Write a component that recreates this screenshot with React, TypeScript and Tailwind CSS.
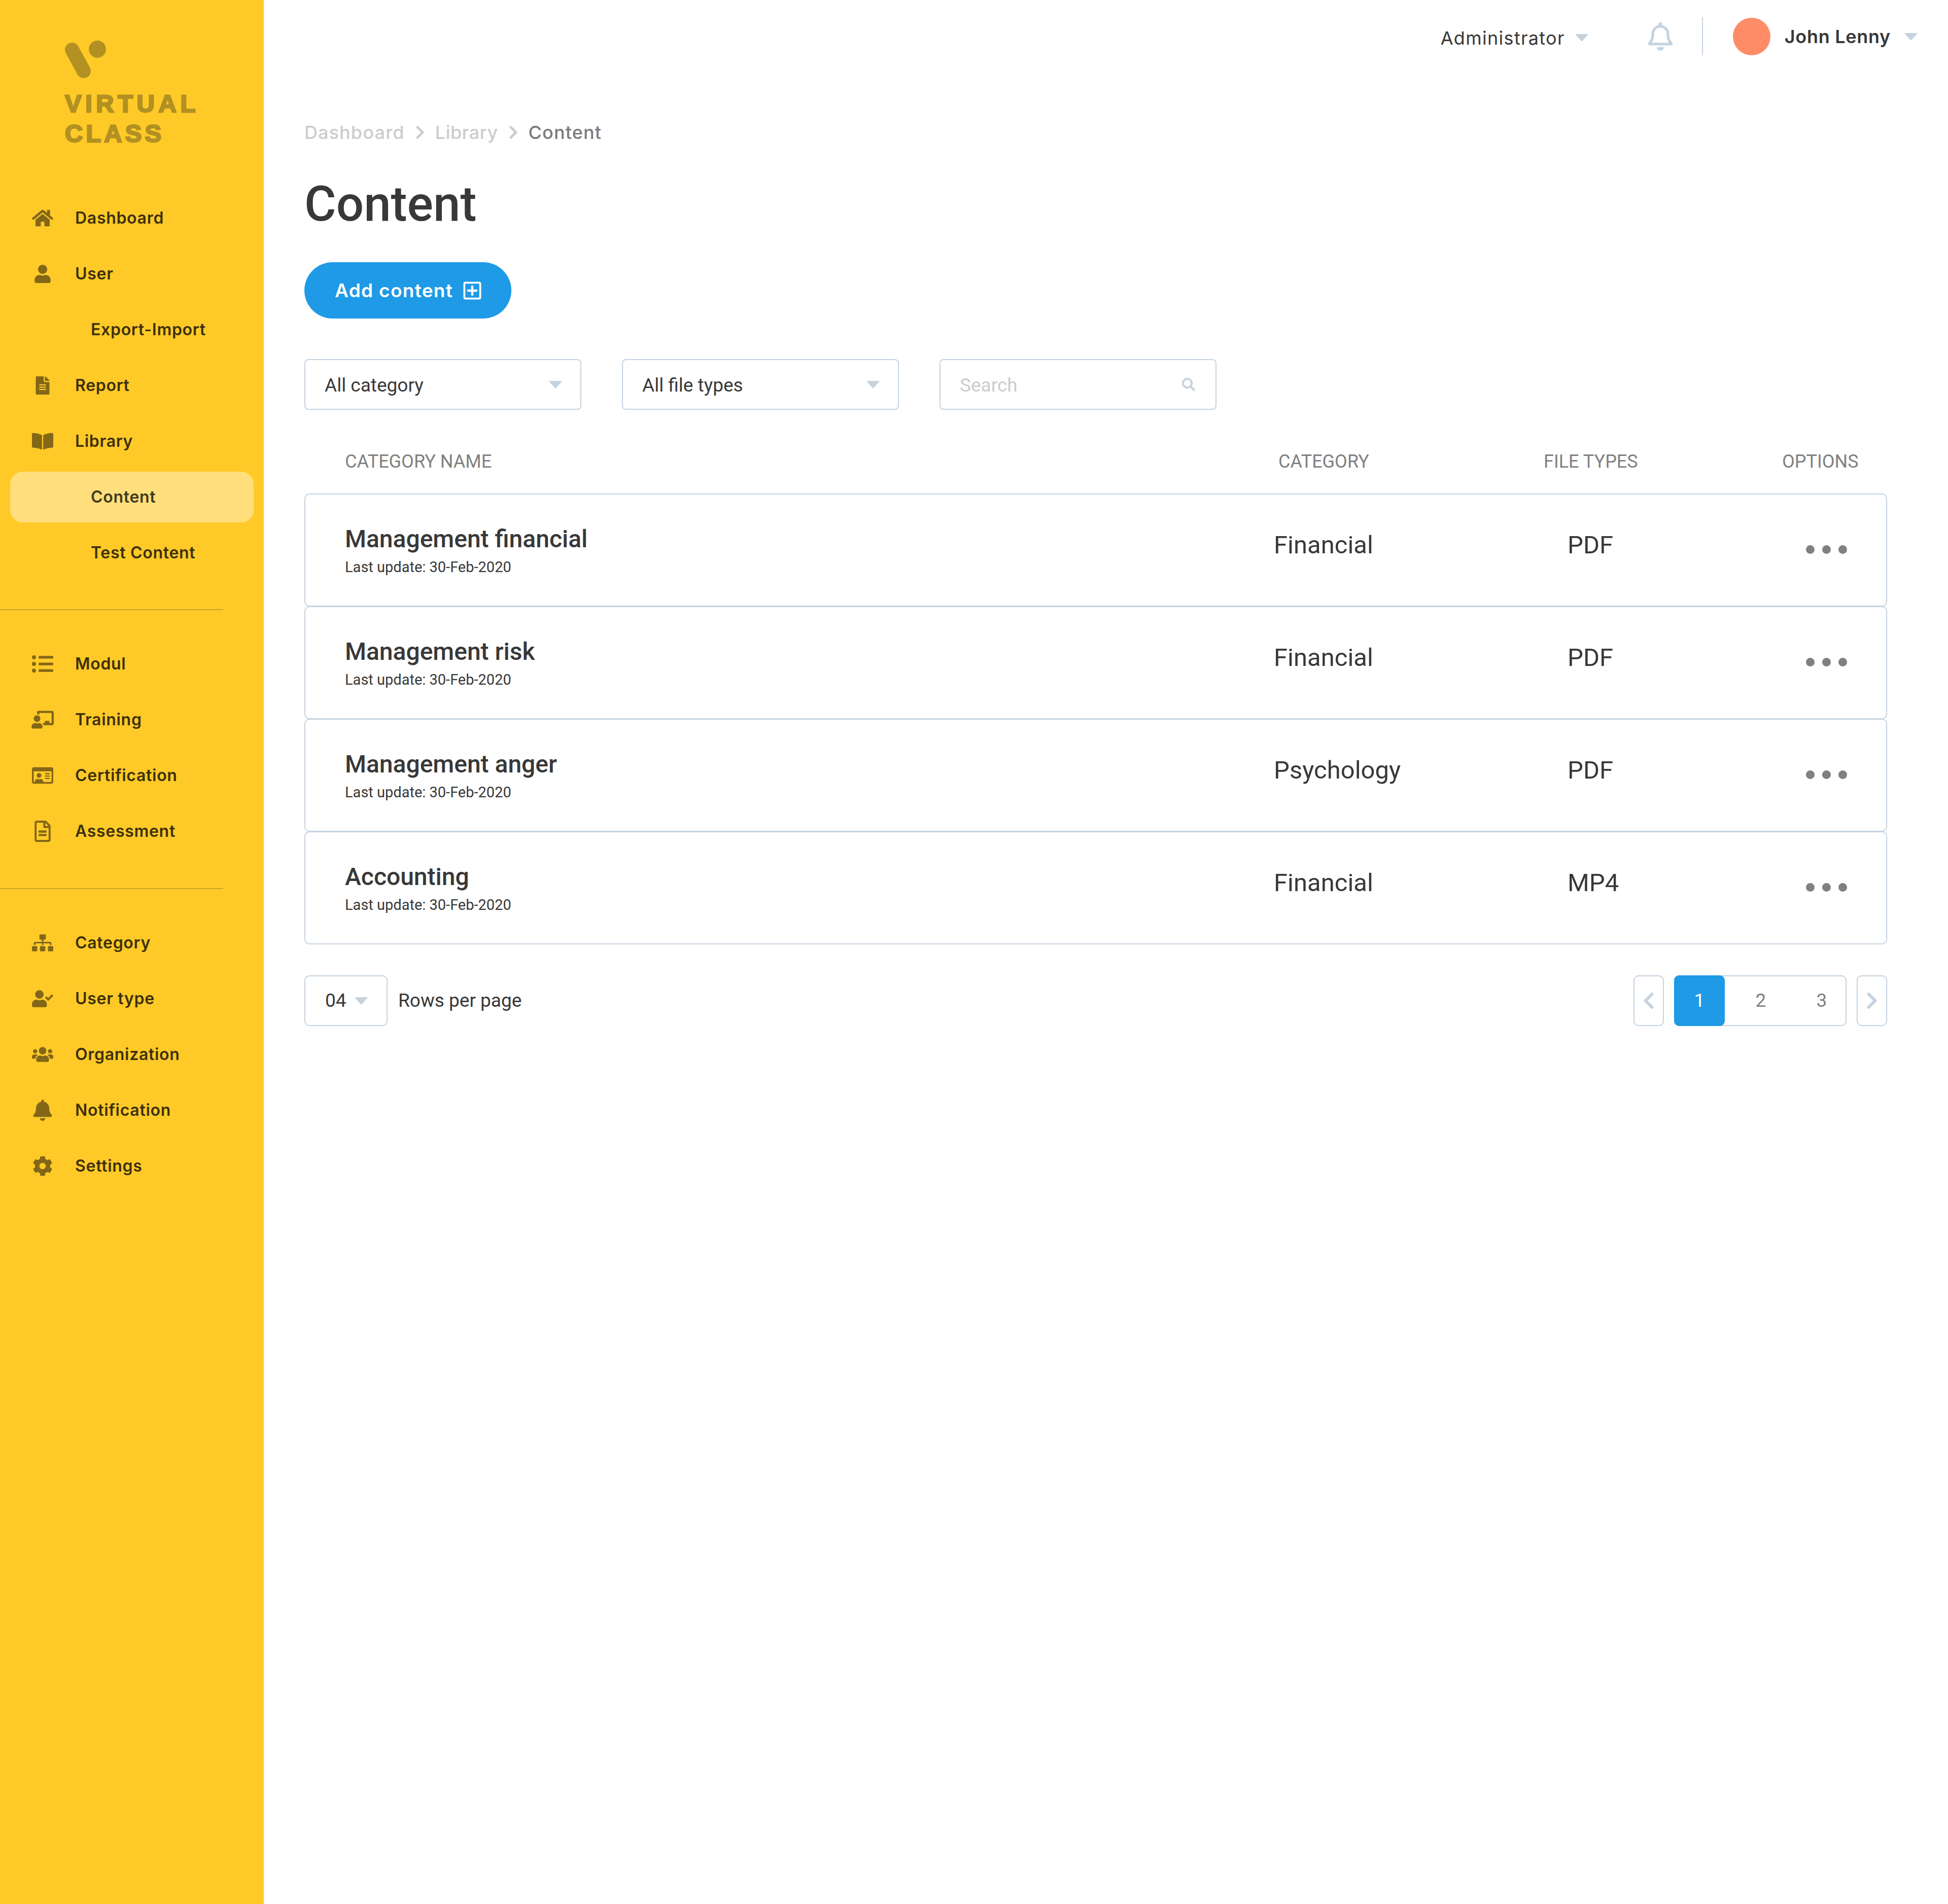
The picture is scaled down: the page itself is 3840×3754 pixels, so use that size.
import type { ReactNode } from 'react';
import {
  FaHome,
  FaUser,
  FaFileAlt,
  FaBookOpen,
  FaListUl,
  FaChalkboardTeacher,
  FaRegIdCard,
  FaRegFileAlt,
  FaSitemap,
  FaUserCheck,
  FaUsers,
  FaBell,
  FaCog,
  FaRegBell,
  FaSearch,
  FaRegPlusSquare,
  FaChevronLeft,
  FaChevronRight,
} from 'react-icons/fa';

const filas = [
  { nombre: 'Management financial', categoria: 'Financial', tipo: 'PDF' },
  { nombre: 'Management risk', categoria: 'Financial', tipo: 'PDF' },
  { nombre: 'Management anger', categoria: 'Psychology', tipo: 'PDF' },
  { nombre: 'Accounting', categoria: 'Financial', tipo: 'MP4' },
];

function Triangle() {
  return (
    <svg width="26" height="16" viewBox="0 0 26 16" className="shrink-0">
      <path d="M2 1h22c1 0 1.600 1 1 1.800L14.500 14.500c-.8.8-2.200.8-3 0L1 2.800C.4 2 1 1 2 1z" fill="#c5d3e0" />
    </svg>
  );
}

function NavItem({ icon, label, active, sub }: { icon?: ReactNode; label: string; active?: boolean; sub?: boolean }) {
  return (
    <div className="h-[110px] flex items-center">
      <div
        className={`h-[100px] w-[480px] ml-[20px] rounded-[25px] flex items-center ${active ? 'bg-[#ffdf7c]' : ''} ${sub ? 'pl-[159px]' : ''}`}
      >
        {!sub && <span className="w-[128px] pl-[20px] pr-[21px] flex justify-center text-[#836717] shrink-0">{icon}</span>}
        <span className={`text-[32px] font-semibold tracking-[0.7px] ${active ? 'text-[#3f3a20]' : 'text-[#3d300a]'}`}>{label}</span>
      </div>
    </div>
  );
}

function Sidebar() {
  return (
    <aside className="w-[520px] shrink-0 bg-[#ffca28] font-['Inter',sans-serif]">
      <div className="h-[375px] pl-[128px] pt-[80px]">
        <svg width="81" height="74" viewBox="128 80 81 74" className="block">
          <line x1="142" y1="98" x2="165" y2="140" stroke="#b29022" strokeWidth="28" strokeLinecap="round" />
          <circle cx="192" cy="97" r="17" fill="#b29022" />
        </svg>
        <div className="mt-[21px] font-['Liberation_Sans',sans-serif] font-bold text-[49px] leading-[59px] text-[#b29022] [-webkit-text-stroke:3px_#b29022]">
          <div className="tracking-[7.500px]">VIRTUAL</div>
          <div className="tracking-[6px]">CLASS</div>
        </div>
      </div>
      <NavItem icon={<FaHome size={42} />} label="Dashboard" />
      <NavItem icon={<FaUser size={36} />} label="User" />
      <NavItem sub label="Export-Import" />
      <NavItem icon={<FaFileAlt size={36} />} label="Report" />
      <NavItem icon={<FaBookOpen size={42} />} label="Library" />
      <NavItem sub active label="Content" />
      <NavItem sub label="Test Content" />
      <div className="mt-[56px] mb-[51px] h-[2px] w-[440px] bg-[#cda627]" />
      <NavItem icon={<FaListUl size={42} />} label="Modul" />
      <NavItem icon={<FaChalkboardTeacher size={44} />} label="Training" />
      <NavItem icon={<FaRegIdCard size={42} />} label="Certification" />
      <NavItem icon={<FaRegFileAlt size={42} />} label="Assessment" />
      <div className="mt-[57px] mb-[51px] h-[2px] w-[440px] bg-[#cda627]" />
      <NavItem icon={<FaSitemap size={42} />} label="Category" />
      <NavItem icon={<FaUserCheck size={42} />} label="User type" />
      <NavItem icon={<FaUsers size={42} />} label="Organization" />
      <NavItem icon={<FaBell size={42} />} label="Notification" />
      <NavItem icon={<FaCog size={40} />} label="Settings" />
    </aside>
  );
}

function TopBar() {
  return (
    <header className="h-[143px] flex items-center justify-end pr-[60px] font-['Inter',sans-serif] text-[#383838]">
      <span className="text-[36px] tracking-[1.300px] mt-[6px]">Administrator</span>
      <span className="ml-[20px] mt-[4px]">
        <Triangle />
      </span>
      <span className="ml-[114px] text-[#c5d3e0]">
        <FaRegBell size={56} />
      </span>
      <span className="ml-[54px] w-[2px] h-[75px] bg-[#c5d3e0]" />
      <span className="ml-[59px] w-[74px] h-[74px] rounded-full bg-[#fd8c67]" />
      <span className="ml-[28px] text-[36px] tracking-[0.7px] font-semibold">John Lenny</span>
      <span className="ml-[27px]">
        <Triangle />
      </span>
    </header>
  );
}

function Filtro({ texto }: { texto: string }) {
  return (
    <div className="w-[546px] h-[100px] border-2 border-[#c5d3e0] rounded-[8px] pl-[38px] pr-[36px] flex items-center justify-between text-[37px] text-[#383838]">
      <span className="pt-[3px]">{texto}</span>
      <Triangle />
    </div>
  );
}

function Fila({ nombre, categoria, tipo, primera }: { nombre: string; categoria: string; tipo: string; primera: boolean }) {
  return (
    <div
      className={`h-[223px] border-2 border-[#c5d3e0] rounded-[10px] pl-[78px] pt-[58px] grid grid-cols-[1831px_579px_470px_1fr] ${primera ? '' : '-mt-[1px]'}`}
    >
      <div>
        <div className="text-[48px] leading-[60px] font-medium text-[#383838]">{nombre}</div>
        <div className="mt-[5px] text-[29px] leading-[40px] text-[#383838]">Last update: 30-Feb-2020</div>
      </div>
      <div className="mt-[12px] text-[49px] leading-[60px] text-[#383838]">{categoria}</div>
      <div className="mt-[12px] text-[49px] leading-[60px] text-[#383838]">{tipo}</div>
      <div className="mt-[42px] flex gap-[15px]">
        <span className="w-[17px] h-[17px] rounded-full bg-[#808080]" />
        <span className="w-[17px] h-[17px] rounded-full bg-[#808080]" />
        <span className="w-[17px] h-[17px] rounded-full bg-[#808080]" />
      </div>
    </div>
  );
}

export default function App() {
  return (
    <div className="flex h-[3754px] bg-white">
      <Sidebar />
      <main className="flex-1 font-['Roboto',sans-serif]">
        <TopBar />
        <div className="pl-[80px] pr-[120px]">
          <nav className="mt-[93px] h-[50px] flex items-center font-['Inter',sans-serif] text-[36px] tracking-[1.100px] font-medium text-[#cccccc]">
            <span>Dashboard</span>
            <FaChevronRight size={30} className="mx-[15px]" />
            <span className="tracking-[0.4px]">Library</span>
            <FaChevronRight size={30} className="mx-[15px]" />
            <span className="text-[#7b7b7b]">Content</span>
          </nav>
          <h1 className="mt-[56px] text-[96px] leading-[120px] font-medium text-[#383838]">Content</h1>
          <button className="mt-[55px] w-[408px] h-[111px] rounded-full bg-[#1e9ae6] text-white flex items-center pl-[60px] font-['Inter',sans-serif] text-[37px] tracking-[1.300px] font-semibold">
            <span>Add content</span>
            <FaRegPlusSquare size={40} className="ml-[18px]" />
          </button>
          <div className="mt-[80px] flex gap-[80px]">
            <Filtro texto="All category" />
            <Filtro texto="All file types" />
            <div className="w-[546px] h-[100px] border-2 border-[#c5d3e0] rounded-[8px] pl-[38px] pr-[40px] flex items-center justify-between text-[37px] text-[#cccccc]">
              <span className="pt-[3px]">Search</span>
              <FaSearch size={26} className="text-[#c5d3e0]" />
            </div>
          </div>
          <div className="mt-[75px] h-[50px] pl-[80px] grid grid-cols-[1840px_523px_470px_1fr] items-center text-[36px] text-[#808080]">
            <span>CATEGORY NAME</span>
            <span>CATEGORY</span>
            <span>FILE TYPES</span>
            <span>OPTIONS</span>
          </div>
          <div className="mt-[40px]">
            {filas.map((f, i) => (
              <Fila key={f.nombre} {...f} primera={i === 0} />
            ))}
          </div>
          <div className="mt-[61px] flex items-center">
            <div className="w-[164px] h-[100px] border-2 border-[#c5d3e0] rounded-[10px] pl-[39px] flex items-center gap-[16px] text-[37px] text-[#383838]">
              <span>04</span>
              <Triangle />
            </div>
            <span className="ml-[21px] text-[37px] text-[#383838]">Rows per page</span>
            <div className="ml-auto flex items-center gap-[20px]">
              <div className="w-[60px] h-[100px] border-2 border-[#c5d3e0] rounded-[10px] flex items-center justify-center text-[#c5d3e0]">
                <FaChevronLeft size={38} />
              </div>
              <div className="w-[340px] h-[100px] border-2 border-[#c5d3e0] rounded-[10px] flex items-center text-[37px] text-[#808080]">
                <span className="w-[100px] h-[100px] shrink-0 -ml-[2px] rounded-[10px] bg-[#1e9ae6] text-white flex items-center justify-center">1</span>
                <span className="ml-[11px] w-[120px] shrink-0 text-center">2</span>
                <span className="ml-[20px] w-[80px] shrink-0 text-center">3</span>
              </div>
              <div className="w-[60px] h-[100px] border-2 border-[#c5d3e0] rounded-[10px] flex items-center justify-center text-[#c5d3e0]">
                <FaChevronRight size={38} />
              </div>
            </div>
          </div>
        </div>
      </main>
    </div>
  );
}
